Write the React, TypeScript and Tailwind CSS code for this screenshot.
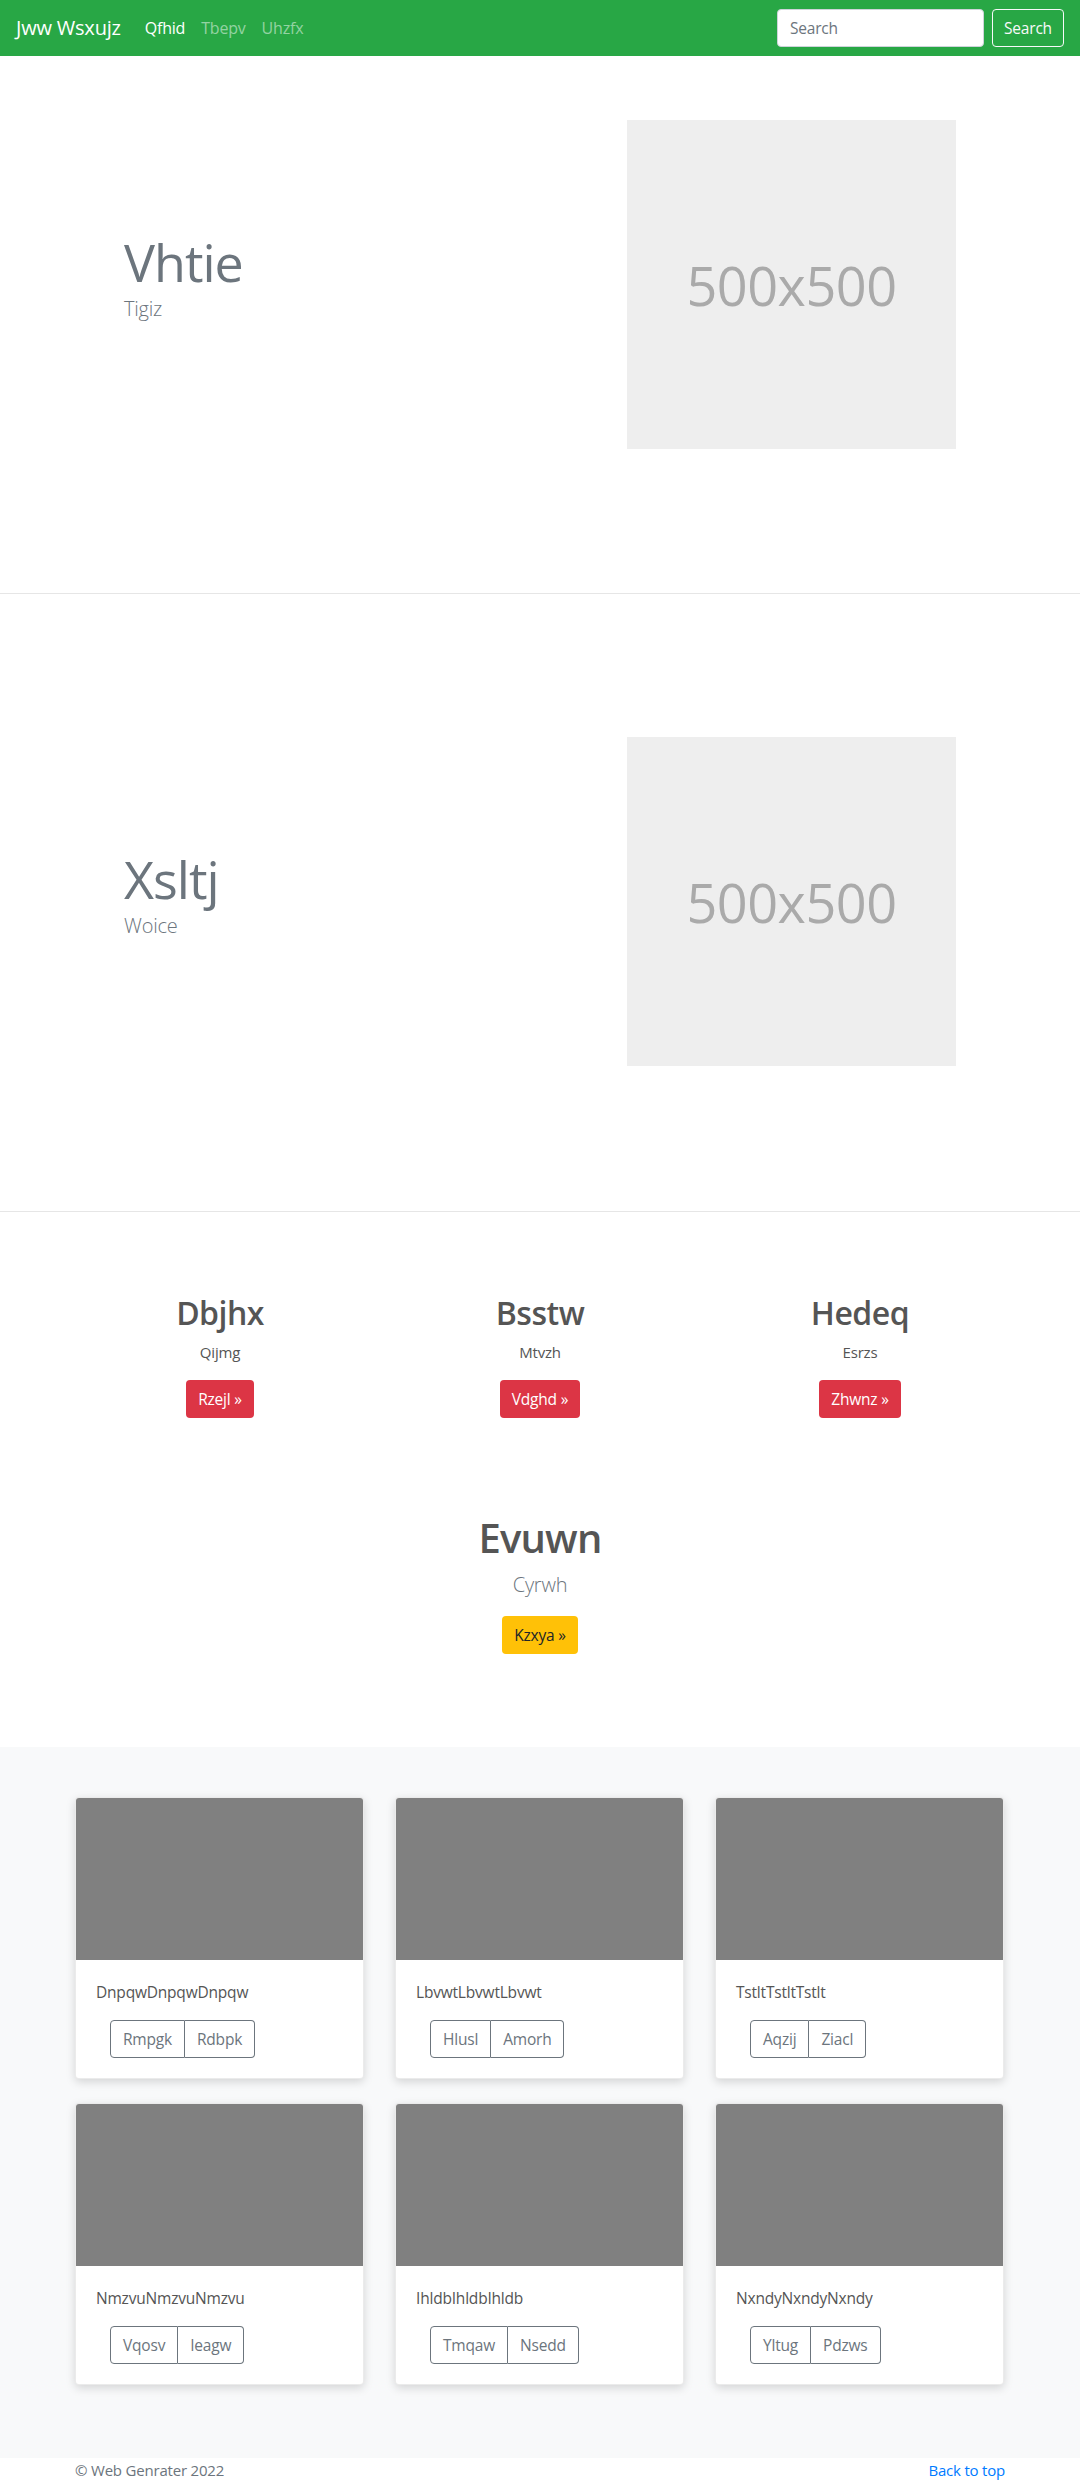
import React from "react";

const font = "font-['Open_Sans',sans-serif]";

function Placeholder() {
  return (
    <div className="w-[329px] h-[329px] bg-[#eeeeee] flex items-center justify-center">
      <span className="text-[54px] text-[#aaaaaa] leading-none tracking-[-0.5px]">500x500</span>
    </div>
  );
}

function Hero({ title, sub, first }: { title: string; sub: string; first?: boolean }) {
  return (
    <section className={first ? "pt-[64px] pb-[144px]" : "pt-[143px] pb-[145px]"}>
      <div className="w-[960px] mx-auto px-[64px] flex items-center justify-between">
        <div>
          <h1 className="text-[52px] font-normal leading-[1.25] text-[#6c757d] tracking-[-1px]">{title}</h1>
          <p className="text-[20px] font-light leading-[30px] text-[#6c757d] mb-4">{sub}</p>
        </div>
        <Placeholder />
      </div>
    </section>
  );
}

const cols = [
  { t: "Dbjhx", s: "Qijmg", b: "Rzejl" },
  { t: "Bsstw", s: "Mtvzh", b: "Vdghd" },
  { t: "Hedeq", s: "Esrzs", b: "Zhwnz" },
];

const cards = [
  { t: "DnpqwDnpqwDnpqw", a: "Rmpgk", b: "Rdbpk" },
  { t: "LbvwtLbvwtLbvwt", a: "Hlusl", b: "Amorh" },
  { t: "TstltTstltTstlt", a: "Aqzij", b: "Ziacl" },
  { t: "NmzvuNmzvuNmzvu", a: "Vqosv", b: "Ieagw" },
  { t: "IhldbIhldbIhldb", a: "Tmqaw", b: "Nsedd" },
  { t: "NxndyNxndyNxndy", a: "Yltug", b: "Pdzws" },
];

export default function App() {
  return (
    <div className={`${font} bg-white text-[#555] tracking-[-0.2px]`}>
      {/* Navbar */}
      <nav className="h-[56px] bg-[#28a745] px-4 flex items-center">
        <span className="text-[20px] text-white leading-[30px] mr-4">Jww Wsxujz</span>
        <div className="flex items-center text-[16px] leading-6">
          <a className="px-2 text-white">Qfhid</a>
          <a className="px-2 text-white/50">Tbepv</a>
          <a className="px-2 text-white/50">Uhzfx</a>
        </div>
        <div className="ml-auto flex items-center">
          <input
            placeholder="Search"
            className="w-[207px] h-[38px] rounded bg-white border border-[#ced4da] px-3 text-[15.5px] text-[#495057] placeholder:text-[#6c757d] mr-2 outline-none"
          />
          <button className="h-[38px] w-[72px] rounded border border-[#f8f9fa] text-[#f8f9fa] text-[15.5px] leading-6">
            Search
          </button>
        </div>
      </nav>

      <Hero title="Vhtie" sub="Tigiz" first />
      <hr className="border-0 border-t border-[#e6e6e6]" />
      <Hero title="Xsltj" sub="Woice" />
      <hr className="border-0 border-t border-[#e6e6e6]" />

      {/* Columns */}
      <section className="pt-[82px] pb-[93px]">
        <div className="w-[960px] mx-auto grid grid-cols-3">
          {cols.map((c) => (
            <div key={c.t} className="flex flex-col items-center">
              <h2 className="text-[32px] font-semibold leading-[38px] mb-2 text-[#555] tracking-[-0.5px]">{c.t}</h2>
              <p className="text-[15px] leading-6 mb-4 text-[#555]">{c.s}</p>
              <button className="h-[38px] px-3 rounded bg-[#dc3545] text-white text-[15.5px] leading-6">
                {c.b} »
              </button>
            </div>
          ))}
        </div>
        <div className="mt-[96px] flex flex-col items-center">
          <h1 className="text-[40px] font-semibold leading-[48px] mb-2 text-[#555] tracking-[-0.8px]">Evuwn</h1>
          <p className="text-[20px] font-light leading-[30px] mb-4 text-[#6c757d]">Cyrwh</p>
          <button className="h-[38px] px-3 rounded bg-[#ffc107] text-[#212529] text-[15.5px] leading-6">
            Kzxya »
          </button>
        </div>
      </section>

      {/* Cards */}
      <section className="bg-[#f8f9fa] pt-[50px] pb-[73px]">
        <div className="w-[930px] mx-auto grid grid-cols-3 gap-x-[30px] gap-y-[24px]">
          {cards.map((c) => (
            <div key={c.t} className="bg-white rounded overflow-hidden border border-black/[0.08] shadow-[0_3px_10px_rgba(0,0,0,0.15)] w-[289px]">
              <div className="h-[162px] bg-[#808080]" />
              <div className="p-5">
                <p className="text-[15.5px] leading-6 text-[#555] mb-4">{c.t}</p>
                <div className="ml-[14px] inline-flex">
                  <button className="h-[38px] px-3 border border-[#6c757d] rounded-l text-[#6c757d] text-[15.5px] leading-6">
                    {c.a}
                  </button>
                  <button className="h-[38px] px-3 border border-l-0 border-[#6c757d] rounded-r text-[#6c757d] text-[15.5px] leading-6">
                    {c.b}
                  </button>
                </div>
              </div>
            </div>
          ))}
        </div>
      </section>

      {/* Footer */}
      <footer className="h-[24px]">
        <div className="w-[930px] mx-auto flex justify-between text-[15px] leading-6">
          <p className="text-[#6c757d]">© Web Genrater 2022</p>
          <a className="text-[#007bff]">Back to top</a>
        </div>
      </footer>
    </div>
  );
}
